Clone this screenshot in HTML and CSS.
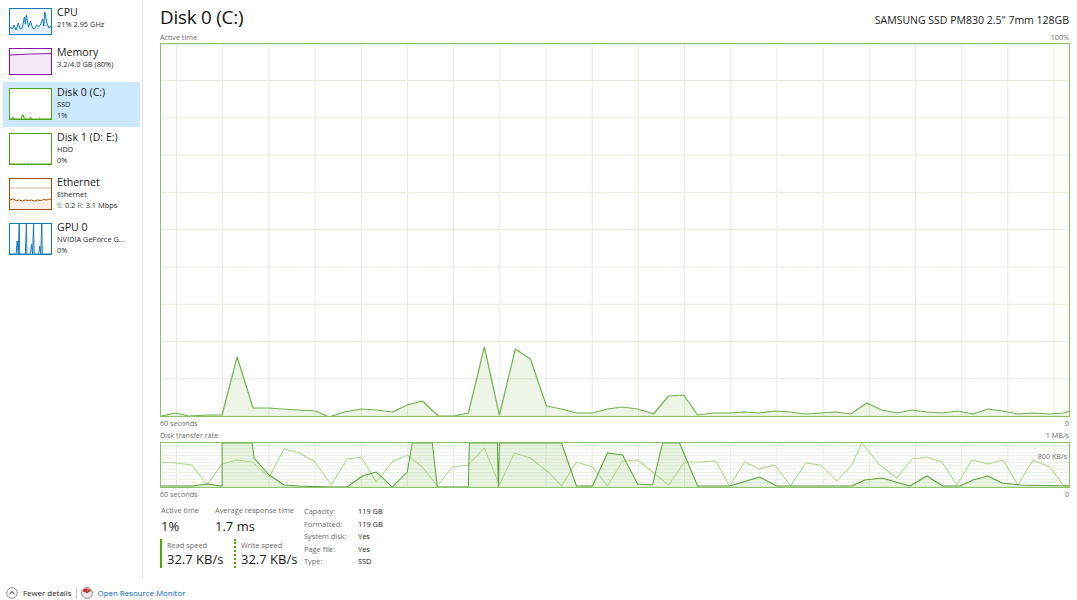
FILE: index.html
```html
<!DOCTYPE html>
<html lang="en">
<head>
<meta charset="utf-8">
<title>Task Manager - Performance</title>
<link rel="stylesheet" href="styles.css">
</head>
<body>
<div class="app">
  <nav class="sidebar">
    <div class="perf-item short">
      <svg class="thumb thumb-cpu" viewBox="0 0 40 25" preserveAspectRatio="none">
        <polygon class="fill" points="0,25 0,18 2,20 4,16 6,21 8,14 10,20 12,19 14,8 15,15 16,6 18,18 20,12 22,19 24,20 26,16 28,18 30,15 32,10 33,17 34,3 36,14 38,19 40,17 40,25"/>
        <polyline class="line" points="0,18 2,20 4,16 6,21 8,14 10,20 12,19 14,8 15,15 16,6 18,18 20,12 22,19 24,20 26,16 28,18 30,15 32,10 33,17 34,3 36,14 38,19 40,17"/>
      </svg>
      <div class="perf-text">
        <div class="perf-name">CPU</div>
        <div class="perf-sub">21% 2.95 GHz</div>
      </div>
    </div>
    <div class="perf-item short">
      <svg class="thumb thumb-mem" viewBox="0 0 40 25" preserveAspectRatio="none">
        <polygon class="fill" points="0,25 0,6 10,5.5 20,5 30,4.8 40,4.6 40,25"/>
        <polyline class="line" points="0,6 10,5.5 20,5 30,4.8 40,4.6"/>
      </svg>
      <div class="perf-text">
        <div class="perf-name">Memory</div>
        <div class="perf-sub">3.2/4.0 GB (80%)</div>
      </div>
    </div>
    <div class="perf-item selected">
      <svg class="thumb thumb-disk" viewBox="0 0 40 30" preserveAspectRatio="none">
        <polygon class="fill" points="0,30 2,30 3,28 4,30 11,30 12,26 13,26 14,30 19,30 20,28 21,30 28,30 29,29 30,30 40,30"/>
        <polyline class="line" points="0,30 2,30 3,28 4,30 11,30 12,26 13,26 14,30 19,30 20,28 21,30 28,30 29,29 30,30 40,30"/>
      </svg>
      <div class="perf-text">
        <div class="perf-name">Disk 0 (C:)</div>
        <div class="perf-sub">SSD</div>
        <div class="perf-sub">1%</div>
      </div>
    </div>
    <div class="perf-item">
      <svg class="thumb thumb-disk" viewBox="0 0 40 30" preserveAspectRatio="none">
        <polyline class="line" points="0,30 17,30 18,29 19,30 40,30"/>
      </svg>
      <div class="perf-text">
        <div class="perf-name">Disk 1 (D: E:)</div>
        <div class="perf-sub">HDD</div>
        <div class="perf-sub">0%</div>
      </div>
    </div>
    <div class="perf-item">
      <svg class="thumb thumb-eth" viewBox="0 0 40 30" preserveAspectRatio="none">
        <line class="grid" x1="0" y1="9" x2="40" y2="9"/>
        <polygon class="fill" points="0,30 0,21 3,20 6,21.5 9,21 12,22 15,21 18,21.5 21,21 24,22 27,21 30,21.5 33,20.5 36,21 38,20 40,20.5 40,30"/>
        <polyline class="line" points="0,21 3,20 6,21.5 9,21 12,22 15,21 18,21.5 21,21 24,22 27,21 30,21.5 33,20.5 36,21 38,20 40,20.5"/>
      </svg>
      <div class="perf-text">
        <div class="perf-name">Ethernet</div>
        <div class="perf-sub">Ethernet</div>
        <div class="perf-sub"><span class="muted">S:</span> 0.2 <span class="muted">R:</span> 3.1 Mbps</div>
      </div>
    </div>
    <div class="perf-item">
      <svg class="thumb thumb-gpu" viewBox="0 0 40 30" preserveAspectRatio="none">
        <polyline class="line" points="0,30 6,30 7,17 8,30 9,0 9.5,30 15,30 16,0 16.5,30 20,30 21,20 22,30 23,0 23.5,30 28,30 29,22 30,30 31,0 31.5,30 40,30"/>
      </svg>
      <div class="perf-text">
        <div class="perf-name">GPU 0</div>
        <div class="perf-sub">NVIDIA GeForce G...</div>
        <div class="perf-sub">0%</div>
      </div>
    </div>
  </nav>

  <main class="detail">
    <header class="detail-head">
      <h1 class="detail-title">Disk 0 (C:)</h1>
      <div class="detail-model">SAMSUNG SSD PM830 2.5" 7mm 128GB</div>
    </header>

    <div class="axis-row"><span>Active time</span><span>100%</span></div>
    <div class="graph graph-active">
      <svg viewBox="162 44 907 372" preserveAspectRatio="none">
        <polygon class="area" points="162,417 162,416 177,413 190,416 207,415 223,415 238,357 254,408 270,408 283,409 300,410 316,411 330,417 345,412 362,409 377,410 393,412 408,405 423,401 439,416 455,416 469,413 485,347 500,415 516,349 531,359 547,406 562,409 577,413 593,413 608,409 623,407 638,409 654,414 669,396 684,395 698,415 714,413 729,413 745,412 760,413 775,411 790,412 806,414 821,413 836,412 851,414 867,403 882,410 897,413 912,410 927,412 942,413 958,411 973,414 988,409 1003,411 1018,414 1034,413 1049,414 1064,413 1069,411 1069,417"/>
        <polyline class="trace" points="162,416 177,413 190,416 207,415 223,415 238,357 254,408 270,408 283,409 300,410 316,411 330,417 345,412 362,409 377,410 393,412 408,405 423,401 439,416 455,416 469,413 485,347 500,415 516,349 531,359 547,406 562,409 577,413 593,413 608,409 623,407 638,409 654,414 669,396 684,395 698,415 714,413 729,413 745,412 760,413 775,411 790,412 806,414 821,413 836,412 851,414 867,403 882,410 897,413 912,410 927,412 942,413 958,411 973,414 988,409 1003,411 1018,414 1034,413 1049,414 1064,413 1069,411"/>
      </svg>
    </div>
    <div class="axis-row axis-under"><span>60 seconds</span><span>0</span></div>

    <div class="axis-row axis-second"><span>Disk transfer rate</span><span>1 MB/s</span></div>
    <div class="graph graph-transfer">
      <svg viewBox="162 443 907 44" preserveAspectRatio="none">
        <polygon class="area" points="162,487 162,486 193,486 208,484 223,486 223,443 253,443 255,458 270,475 285,485 300,486 332,487 348,487 363,476 377,472 393,487 408,472 413,443 433,443 438,487 469,487 470,443 498,443 499,487 500,443 562,443 577,486 593,486 608,453 623,455 638,484 653,485 663,443 680,443 698,486 730,486 760,477 777,486 852,486 865,480 882,478 910,486 927,476 943,486 960,486 973,480 988,476 1002,483 1020,485 1069,486 1069,487"/>
        <polyline class="read" points="162,462 177,463 193,465 208,485 223,464 238,460 253,462 270,477 285,449 300,453 316,462 332,485 348,459 362,457 377,482 393,462 408,455 423,467 438,486 453,467 469,465 485,448 500,485 515,453 531,458 550,473 562,486 577,462 593,467 608,486 623,461 638,460 653,472 669,485 685,462 700,462 716,461 730,486 745,462 760,469 775,465 791,486 806,463 821,465 837,481 852,465 862,443 880,465 897,478 912,459 927,457 942,462 957,485 972,460 988,464 1003,460 1018,485 1033,460 1050,467 1063,485 1069,486"/>
        <polyline class="write" points="162,486 193,486 208,484 223,486 223,443 253,443 255,458 270,475 285,485 300,486 332,487 348,487 363,476 377,472 393,487 408,472 413,443 433,443 438,487 469,487 470,443 498,443 499,487 500,443 562,443 577,486 593,486 608,453 623,455 638,484 653,485 663,443 680,443 698,486 730,486 760,477 777,486 852,486 865,480 882,478 910,486 927,476 943,486 960,486 973,480 988,476 1002,483 1020,485 1069,486"/>
      </svg>
      <span class="graph-mark">800 KB/s</span>
    </div>
    <div class="axis-row axis-under"><span>60 seconds</span><span>0</span></div>

    <section class="stats">
      <div class="stats-main">
        <div class="stats-row">
          <div class="stat stat-active">
            <div class="stat-label">Active time</div>
            <div class="stat-value">1%</div>
          </div>
          <div class="stat">
            <div class="stat-label">Average response time</div>
            <div class="stat-value">1.7 ms</div>
          </div>
        </div>
        <div class="stats-row speeds">
          <div class="speed speed-read">
            <div class="stat-label">Read speed</div>
            <div class="stat-value">32.7 KB/s</div>
          </div>
          <div class="speed speed-write">
            <div class="stat-label">Write speed</div>
            <div class="stat-value">32.7 KB/s</div>
          </div>
        </div>
      </div>
      <dl class="props">
        <dt>Capacity:</dt><dd>119 GB</dd>
        <dt>Formatted:</dt><dd>119 GB</dd>
        <dt>System disk:</dt><dd>Yes</dd>
        <dt>Page file:</dt><dd>Yes</dd>
        <dt>Type:</dt><dd>SSD</dd>
      </dl>
    </section>
  </main>
</div>

<footer class="footer">
  <span class="footer-link plain">
    <svg class="ico" viewBox="0 0 13 13">
      <circle cx="6.5" cy="6.5" r="5.7" fill="none" stroke="#8a8a8a" stroke-width="1"/>
      <polyline points="3.8,7.8 6.5,5.1 9.2,7.8" fill="none" stroke="#555" stroke-width="1.1"/>
    </svg>
    Fewer details
  </span>
  <span class="footer-sep"></span>
  <span class="footer-link">
    <svg class="ico" viewBox="0 0 12 12">
      <circle cx="6" cy="6" r="5.4" fill="#e8e8e8" stroke="#8d8d8d" stroke-width="0.9"/>
      <path d="M6 6 L1.6 4.2 A4.7 4.7 0 0 1 6 1.3 Z" fill="#c9302c"/>
      <path d="M6 6 L6 1.3 A4.7 4.7 0 0 1 10.4 4.2 Z" fill="#e06a5a"/>
      <line x1="6" y1="6" x2="8.6" y2="3" stroke="#333" stroke-width="0.9"/>
    </svg>
    Open Resource Monitor
  </span>
</footer>
</body>
</html>
```

FILE: styles.css
```css
html, body {
  margin: 0;
  padding: 0;
  background: #ffffff;
}

body {
  width: 1077px;
  height: 600px;
  overflow: hidden;
  font-family: "Open Sans", "Noto Sans", "Liberation Sans", sans-serif;
  color: #1a1a1a;
}

.app {
  display: flex;
  height: 579px;
}

/* ---------- left list of performance counters ---------- */
.sidebar {
  width: 143px;
  flex: none;
  border-right: 1px solid #e3e3e3;
  padding-top: 2px;
  box-sizing: border-box;
}

.perf-item {
  display: flex;
  align-items: flex-start;
  gap: 5px;
  height: 45px;
  margin: 0 2px 0 3px;
  padding: 6px 0 0 6px;
  box-sizing: border-box;
}

.perf-item.short {
  height: 40px;
}

.perf-item.selected {
  background: #cce8ff;
}

.thumb {
  flex: none;
  width: 41px;
  height: 30px;
  border: 1px solid;
  background: #fff;
  overflow: hidden;
}

.perf-item.short .thumb {
  height: 25px;
}

.thumb .line {
  fill: none;
  stroke-width: 1;
  vector-effect: non-scaling-stroke;
}

.thumb-cpu { border-color: #117dbb; }
.thumb-cpu .line { stroke: #117dbb; }
.thumb-cpu .fill { fill: #e3eff8; }

.thumb-mem { border-color: #8b12ae; }
.thumb-mem .line { stroke: #8b12ae; }
.thumb-mem .fill { fill: #f4eaf7; }

.thumb-disk { border-color: #4da60c; }
.thumb-disk .line { stroke: #4da60c; }
.thumb-disk .fill { fill: #d7ebc8; }

.thumb-eth { border-color: #a74f01; }
.thumb-eth .line { stroke: #a74f01; }
.thumb-eth .fill { fill: #f8efe6; }
.thumb-eth .grid { stroke: #d9b89c; stroke-width: 1; vector-effect: non-scaling-stroke; }

.thumb-gpu { border-color: #117dbb; }
.thumb-gpu .line { stroke: #117dbb; }

.perf-text {
  padding-top: 0;
}

.perf-name {
  font-size: 10.6px;
  line-height: 12px;
  color: #1a1a1a;
  margin-top: -2px;
  margin-bottom: 1px;
}

.perf-sub {
  font-size: 7.4px;
  line-height: 11px;
  color: #2a2a2a;
}

.perf-sub .muted {
  color: #7a7a7a;
}

/* ---------- detail pane ---------- */
.detail {
  flex: 1;
  padding: 0 7px 0 17px;
  min-width: 0;
}

.detail-head {
  display: flex;
  justify-content: space-between;
  align-items: baseline;
  height: 32px;
}

.detail-title {
  margin: 0;
  font-weight: 400;
  font-size: 18.8px;
  line-height: 34px;
  color: #111;
  letter-spacing: -0.2px;
}

.detail-model {
  font-size: 10.5px;
  color: #1a1a1a;
  padding-right: 1px;
}

.axis-row {
  display: flex;
  justify-content: space-between;
  height: 11px;
  font-size: 7.2px;
  line-height: 11px;
  color: #6b6b6b;
}

.axis-row span:last-child {
  padding-right: 1px;
}

.axis-under {
  margin-top: 1px;
}

.axis-second {
  margin-top: 1px;
  height: 12px;
  line-height: 11px;
}

.graph {
  position: relative;
  border: 1px solid #8bc36a;
  background-color: #fff;
}

.graph svg {
  display: block;
  width: 100%;
  height: 100%;
}

.graph-active {
  height: 372px;
  background-image:
    linear-gradient(to right, #e3ecdc 1px, transparent 1px),
    linear-gradient(to bottom, #e3ecdc 1px, transparent 1px);
  background-size: 46.2px 100%, 100% 37.3px;
  background-position: 15px 0, 0 36px;
}

.graph-active .area {
  fill: rgba(150, 200, 115, 0.18);
}

.graph-active .trace {
  fill: none;
  stroke: #74b452;
  stroke-width: 1.2;
  stroke-linejoin: round;
}

.graph-transfer {
  height: 44px;
  background-image:
    linear-gradient(to right, #e3ecdc 1px, transparent 1px),
    linear-gradient(to bottom, #e6eee1 1px, transparent 1px);
  background-size: 46.2px 100%, 100% 3.4px;
  background-position: 15px 0, 0 2px;
}

.graph-transfer .area {
  fill: rgba(150, 200, 115, 0.2);
}

.graph-transfer .read {
  fill: none;
  stroke: #b2d68f;
  stroke-width: 1;
  stroke-linejoin: round;
}

.graph-transfer .write {
  fill: none;
  stroke: #5e9f38;
  stroke-width: 1;
  stroke-linejoin: round;
}

.graph-mark {
  position: absolute;
  right: 2px;
  top: 9px;
  font-size: 7.2px;
  line-height: 9px;
  color: #6b6b6b;
  background: rgba(255, 255, 255, 0.6);
}

/* ---------- statistics block ---------- */
.stats {
  display: flex;
  padding-top: 5px;
}

.stats-main {
  display: flex;
  flex-direction: column;
  width: 144px;
  flex: none;
}

.stats-row {
  display: flex;
}

.stat-active {
  width: 54px;
  padding-left: 1px;
}

.stat-label {
  font-size: 7.4px;
  line-height: 11px;
  color: #6b6b6b;
  white-space: nowrap;
}

.stat-value {
  font-size: 13px;
  line-height: 20px;
  color: #1a1a1a;
  white-space: nowrap;
}

.speeds {
  margin-top: 3px;
}

.speed {
  padding-left: 5px;
  height: 29px;
  box-sizing: border-box;
}

.speed .stat-label {
  line-height: 10px;
  margin-top: 1px;
}

.speed .stat-value {
  line-height: 18px;
}

.speed-read {
  width: 74px;
  border-left: 2px solid #4da60c;
}

.speed-write {
  border-left: 2px dotted #4da60c;
}

.props {
  display: grid;
  grid-template-columns: 54px auto;
  margin: 0;
  font-size: 7.4px;
  line-height: 12.3px;
}

.props dt {
  color: #6b6b6b;
}

.props dd {
  margin: 0;
  color: #1a1a1a;
}

/* ---------- footer ---------- */
.footer {
  display: flex;
  align-items: center;
  height: 14px;
  padding: 7px 0 0 6px;
  font-size: 7.9px;
  line-height: 12px;
  color: #1a1a1a;
}

.footer-link {
  display: flex;
  align-items: center;
  gap: 5px;
  color: #0066cc;
}

.footer-link.plain {
  color: #1a1a1a;
}

.ico {
  width: 12px;
  height: 12px;
  flex: none;
}

.footer-sep {
  width: 1px;
  height: 11px;
  background: #c8c8c8;
  margin: 0 4px 0 4px;
}
```
